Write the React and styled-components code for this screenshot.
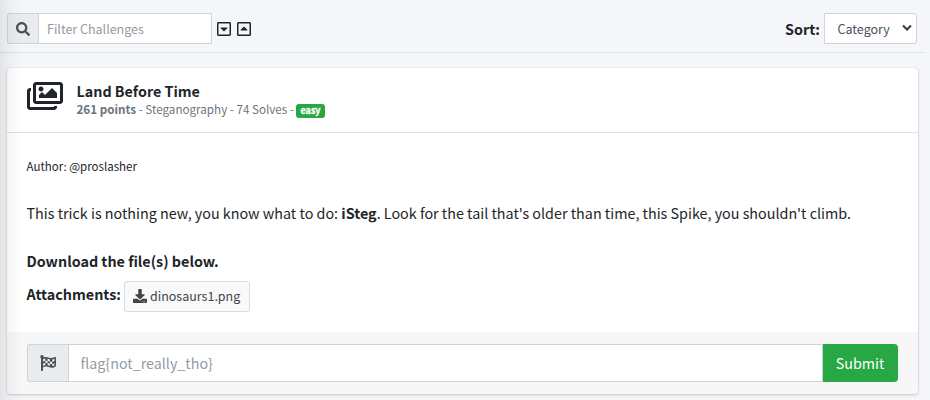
import React from "react";
import styled, { createGlobalStyle } from "styled-components";
import {
  FaSearch,
  FaRegCaretSquareDown,
  FaRegCaretSquareUp,
  FaRegImages,
  FaDownload,
  FaFlagCheckered,
} from "react-icons/fa";

const GlobalStyle = createGlobalStyle`
  *, *::before, *::after { box-sizing: border-box; }
  body {
    margin: 0;
    overflow: hidden;
    background: #f4f6f9;
    color: #212529;
    font-family: "Source Sans Pro", "Noto Sans CJK SC", sans-serif;
    font-size: 14.33px;
    line-height: 24px;
  }
  input, button, select { font-family: inherit; margin: 0; }
  svg { display: block; flex: none; }
`;

const Page = styled.div`
  position: relative;
  height: 400px;
  overflow: hidden;
`;

const SidebarShadow = styled.div`
  position: absolute;
  inset: 0 auto 0 0;
  width: 24px;
  pointer-events: none;
  background: linear-gradient(90deg, rgba(0, 0, 0, 0.075), rgba(0, 0, 0, 0.035) 35%, rgba(0, 0, 0, 0.01) 70%, transparent);
`;

const Toolbar = styled.header`
  display: flex;
  align-items: flex-start;
  width: 925px;
  height: 53px;
  padding: 13px 8px 0 7px;
  border-bottom: 1px solid #dee2e6;
`;

const InputGroup = styled.div`
  display: flex;
  width: ${(p) => p.$width || "auto"};
  height: ${(p) => p.$height}px;
`;

const Addon = styled.span`
  display: flex;
  align-items: center;
  justify-content: center;
  width: ${(p) => p.$width}px;
  padding-right: 1px;
  border: 1px solid #ced4da;
  border-right: 0;
  border-radius: 3px 0 0 3px;
  background: #e9ecef;
  color: #495057;
`;

const TextInput = styled.input`
  flex: 1;
  min-width: 0;
  padding: 0 ${(p) => p.$pad}px ${(p) => p.$lift || 0}px;
  border: 1px solid #ced4da;
  border-radius: 0;
  background: #fff;
  font-size: ${(p) => p.$size}px;
  outline: none;
  &::placeholder { color: #939ba2; opacity: 1; }
`;

const Toggles = styled.div`
  display: flex;
  gap: 4px;
  margin: 8px 0 0 3.5px;
`;

const Sort = styled.label`
  display: flex;
  align-items: center;
  gap: 4px;
  height: 31px;
  margin-left: auto;
  font-weight: 700;
`;

const SelectBox = styled.span`
  display: flex;
  align-items: center;
  justify-content: space-between;
  width: 93px;
  height: 31px;
  padding: 0 4px 0 12.5px;
  border: 1px solid #ced4da;
  border-radius: 0 3px 3px 0;
  background: #fff;
  color: #495057;
  font-size: 12.5px;
  font-weight: 400;
`;

const Chevron = styled.svg`
  margin-bottom: 2px;
`;

const Card = styled.section`
  width: 911px;
  margin: 15px 0 0 7px;
  border-radius: 4px;
  background: #fff;
  box-shadow: 0 0 1px rgba(0, 0, 0, 0.125), 0 1px 3px rgba(0, 0, 0, 0.2);
`;

const CardHeader = styled.div`
  display: flex;
  height: 65px;
  padding: 10px 20px 0 19.5px;
  border-bottom: 1px solid #dfdfdf;
`;

const Heading = styled.div`
  margin-left: 14px;
`;

const Title = styled.h1`
  margin: 4px 0 0;
  font-size: 14.3px;
  line-height: 18px;
  font-weight: 700;
`;

const Meta = styled.div`
  display: flex;
  align-items: center;
  color: #6c757d;
  font-size: 11.65px;
  line-height: 18px;
  white-space: pre;
`;

const Badge = styled.span`
  height: 14px;
  margin-top: 4px;
  padding: 0 4px;
  border-radius: 3px;
  background: #28a745;
  color: #fff;
  font-size: 9px;
  line-height: 13px;
  font-weight: 700;
  -webkit-text-stroke: 0.3px #fff;
`;

const CardBody = styled.div`
  height: 199px;
  padding: 21px 20px 0 19.5px;
`;

const Paragraph = styled.p`
  margin: 0 0 24px;
  white-space: nowrap;
  font-weight: ${(p) => (p.$bold ? 700 : 400)};
`;

const Author = styled.p`
  margin: 0 0 23px;
  font-size: 11.5px;
`;

const Attachments = styled.div`
  display: flex;
  align-items: flex-start;
  gap: 3.5px;
  margin-top: -16px;
  font-weight: 700;
  line-height: 25px;
`;

const FileButton = styled.button`
  display: flex;
  align-items: center;
  gap: 2.5px;
  width: 126px;
  height: 31px;
  padding: 0 8px 1px;
  border: 1px solid #ddd;
  border-radius: 3px;
  background: #f8f9fa;
  color: #444;
  font-size: 12.5px;
  white-space: nowrap;
`;

const FileName = styled.span`
  padding-bottom: 2px;
`;

const CardFooter = styled.div`
  height: 62px;
  padding: 12px 20px;
  border-radius: 0 0 4px 4px;
  background: #f7f7f7;
`;

const Submit = styled.button`
  width: 75px;
  padding: 0 1px 2px 0;
  border: 0;
  border-radius: 0 4px 4px 0;
  background: #28a745;
  color: #fff;
  font-size: 14.3px;
`;

export default function App() {
  return (
    <Page>
      <GlobalStyle />
      <Toolbar>
        <InputGroup $width="205px" $height={31}>
          <Addon $width={31}><FaSearch size={14} /></Addon>
          <TextInput $pad={8} $size={12.5} placeholder="Filter Challenges" />
        </InputGroup>
        <Toggles>
          <FaRegCaretSquareDown size={16} />
          <FaRegCaretSquareUp size={16} />
        </Toggles>
        <Sort>
          Sort:
          <SelectBox>
            Category
            <Chevron width="10" height="8" viewBox="0 0 10 8" fill="none" stroke="#343a40" strokeWidth="2">
              <path d="M1 1.5 5 5.5 9 1.5" />
            </Chevron>
          </SelectBox>
        </Sort>
      </Toolbar>
      <Card>
        <CardHeader>
          <FaRegImages size={36} />
          <Heading>
            <Title>Land Before Time</Title>
            <Meta>
              <b>261 points</b> - Steganography - 74 Solves - <Badge>easy</Badge>
            </Meta>
          </Heading>
        </CardHeader>
        <CardBody>
          <Author>Author: @proslasher</Author>
          <Paragraph>
            This trick is nothing new, you know what to do: <b>iSteg</b>. Look for the tail that's older than time, this
            Spike, you shouldn't climb.
          </Paragraph>
          <Paragraph $bold>Download the file(s) below.</Paragraph>
          <Attachments>
            Attachments:
            <FileButton><FaDownload size={14} /><FileName>dinosaurs1.png</FileName></FileButton>
          </Attachments>
        </CardBody>
        <CardFooter>
          <InputGroup $height={38}>
            <Addon $width={41}><FaFlagCheckered size={16} /></Addon>
            <TextInput $pad={11.5} $lift={2} $size={14.3} placeholder="flag{not_really_tho}" />
            <Submit>Submit</Submit>
          </InputGroup>
        </CardFooter>
      </Card>
      <SidebarShadow />
    </Page>
  );
}
